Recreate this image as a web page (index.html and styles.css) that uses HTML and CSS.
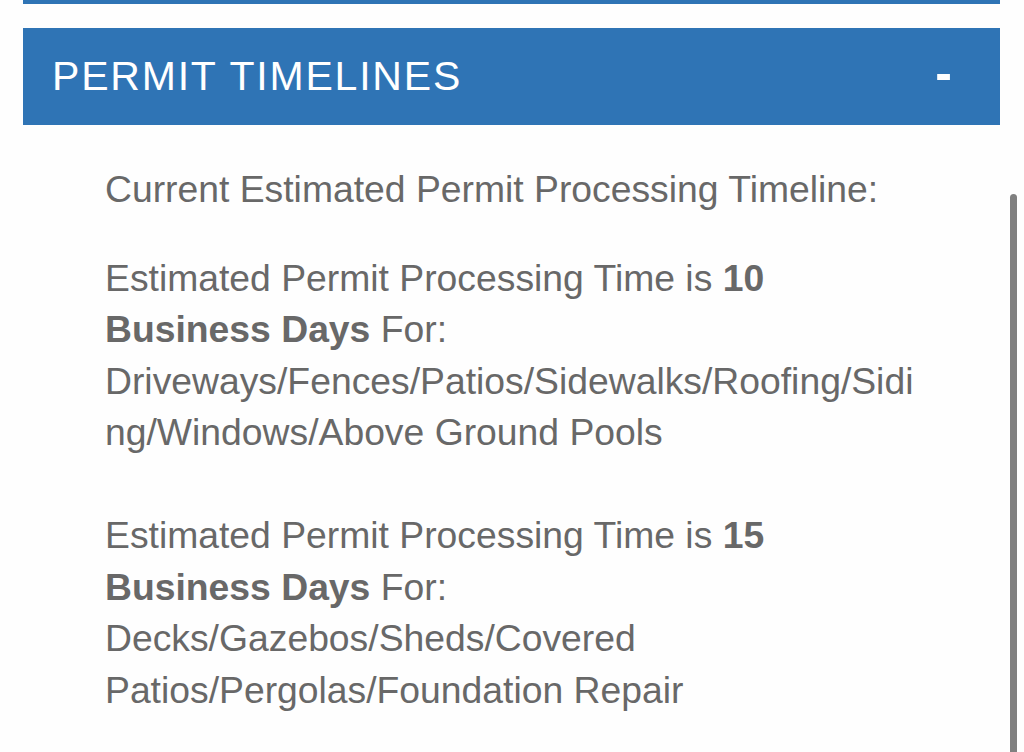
FILE: index.html
```html
<!DOCTYPE html>
<html lang="en">
<head>
<meta charset="utf-8">
<title>Permit Timelines</title>
<link rel="stylesheet" href="styles.css">
</head>
<body>
<div class="page">
  <div class="prev-bar"></div>
  <section class="accordion">
    <div class="acc-header">
      <h2 class="acc-title">PERMIT TIMELINES</h2>
      <span class="acc-toggle">-</span>
    </div>
    <div class="acc-body">
      <p>Current Estimated Permit Processing Timeline:</p>
      <p>Estimated Permit Processing Time is <strong>10 Business Days</strong> For:<br>Driveways/Fences/Patios/Sidewalks/Roofing/Siding/Windows/Above Ground Pools<br><br>Estimated Permit Processing Time is <strong>15 Business Days</strong> For:<br>Decks/Gazebos/Sheds/Covered Patios/Pergolas/Foundation Repair</p>
    </div>
  </section>
  <div class="scrollbar"></div>
</div>
</body>
</html>
```

FILE: styles.css
```css
html, body {
  margin: 0;
  padding: 0;
  background: #fefefe;
}

body {
  font-family: "Liberation Sans", Arial, Helvetica, sans-serif;
  width: 1024px;
  height: 752px;
  overflow: hidden;
}

.page {
  position: relative;
  height: 752px;
  overflow: hidden;
  padding: 0 24px 0 23px;
}

.prev-bar {
  height: 4px;
  background: #2f74b5;
  margin-bottom: 24px;
}

.acc-header {
  height: 97px;
  background: #2f74b5;
  display: flex;
  align-items: center;
  justify-content: space-between;
  padding: 0 48px 0 29px;
  box-sizing: border-box;
}

.acc-title {
  margin: 0;
  color: #ffffff;
  font-weight: normal;
  font-size: 41px;
  letter-spacing: 1.8px;
  line-height: 1;
}

.acc-toggle {
  color: #ffffff;
  font-size: 50px;
  font-weight: bold;
  line-height: 1;
  margin-top: -8px;
}

.acc-body {
  padding: 39px 78px 0 82px;
  color: #686868;
  font-size: 37.3px;
  line-height: 51.5px;
  overflow-wrap: break-word;
}

.acc-body p {
  margin: 0 0 37px;
}

.acc-body strong {
  font-weight: bold;
}

.scrollbar {
  position: absolute;
  left: 1010px;
  top: 194px;
  width: 7px;
  height: 558px;
  border-radius: 3.5px 3.5px 0 0;
  background: #808080;
}
```
